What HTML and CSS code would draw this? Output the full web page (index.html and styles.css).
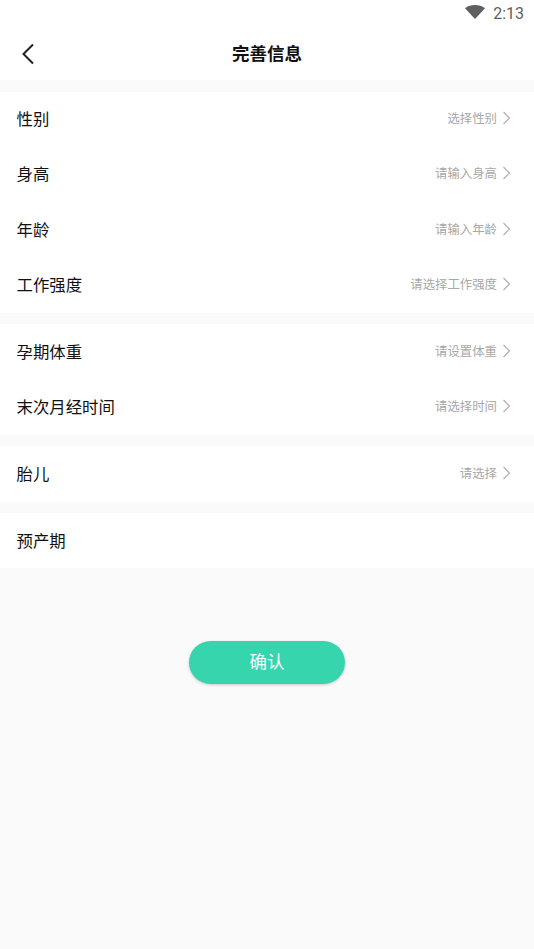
FILE: index.html
```html
<!DOCTYPE html>
<html lang="zh">
<head>
	<meta charset="utf-8">
	<title>完善信息</title>
	<link rel="stylesheet" href="styles.css">
</head>
<body>
	<div class="status_bar">
		<svg class="wifi" width="20" height="14" viewBox="0 0 20 14"><path d="M0 3.200C2.800 1 6.200 0 10 0s7.200 1 10 3.200L10 14z"/></svg>
		<span class="clock">2:13</span>
	</div>

	<div class="title_bar">
		<svg class="back" width="14" height="22" viewBox="0 0 14 22"><path d="M12 1.500 2.500 11 12 20.500"/></svg>
		<h1>完善信息</h1>
	</div>

	<div class="group">
		<div class="item"><span class="name">性别</span><span class="hint">选择性别</span><svg class="arrow" width="9" height="14" viewBox="0 0 9 14"><path d="M1.500 1 7.500 7 1.500 13"/></svg></div>
		<div class="item"><span class="name">身高</span><span class="hint">请输入身高</span><svg class="arrow" width="9" height="14" viewBox="0 0 9 14"><path d="M1.500 1 7.500 7 1.500 13"/></svg></div>
		<div class="item"><span class="name">年龄</span><span class="hint">请输入年龄</span><svg class="arrow" width="9" height="14" viewBox="0 0 9 14"><path d="M1.500 1 7.500 7 1.500 13"/></svg></div>
		<div class="item"><span class="name">工作强度</span><span class="hint">请选择工作强度</span><svg class="arrow" width="9" height="14" viewBox="0 0 9 14"><path d="M1.500 1 7.500 7 1.500 13"/></svg></div>
	</div>

	<div class="group">
		<div class="item"><span class="name">孕期体重</span><span class="hint">请设置体重</span><svg class="arrow" width="9" height="14" viewBox="0 0 9 14"><path d="M1.500 1 7.500 7 1.500 13"/></svg></div>
		<div class="item"><span class="name">末次月经时间</span><span class="hint">请选择时间</span><svg class="arrow" width="9" height="14" viewBox="0 0 9 14"><path d="M1.500 1 7.500 7 1.500 13"/></svg></div>
	</div>

	<div class="group">
		<div class="item"><span class="name">胎儿</span><span class="hint">请选择</span><svg class="arrow" width="9" height="14" viewBox="0 0 9 14"><path d="M1.500 1 7.500 7 1.500 13"/></svg></div>
	</div>

	<div class="group">
		<div class="item"><span class="name">预产期</span></div>
	</div>

	<div class="actions">
		<button class="confirm" type="button">确认</button>
	</div>
</body>
</html>
```

FILE: styles.css
```css
html, body { margin: 0; padding: 0; }
body { height: 949px; overflow: hidden; background-color: #fafafa; font-family: "Noto Sans CJK SC", "Noto Sans", sans-serif; color: #111; }

.status_bar { height: 27px; display: flex; align-items: center; justify-content: flex-end; padding-right: 10px; background-color: #fff; }
.wifi { margin-right: 8px; margin-top: -3px; fill: #5f5f5f; }
.clock { font-family: Roboto, sans-serif; font-size: 16px; color: #5f5f5f; }

.title_bar { position: relative; height: 53px; display: flex; align-items: center; justify-content: center; background-color: #fff; }
.title_bar h1 { margin: 0 0 2px; font-size: 17.500px; font-weight: 700; color: #111; }
.back { position: absolute; left: 21px; top: 16px; fill: none; stroke: #222; stroke-width: 2; }

.group { margin-top: 11.600px; background-color: #fff; }
.item { height: 55.250px; display: flex; align-items: center; padding: 0 23px 0 16.500px; }
.name { flex: 1; margin-bottom: 2px; font-size: 16.400px; }
.hint { margin-bottom: 2px; font-size: 12.400px; color: #a8a8a8; }
.arrow { margin: 0 0 2px 5px; fill: none; stroke: #b0b0b0; stroke-width: 1.200; }

.actions { display: flex; justify-content: center; padding-top: 72.600px; }
.confirm { width: 156px; height: 43px; padding: 0 0 3px; border: 0; border-radius: 22px; background-color: #36d5ae; box-shadow: 0 1px 3px rgba(0, 0, 0, .2); font-family: inherit; font-size: 17.500px; color: #fff; }
```
